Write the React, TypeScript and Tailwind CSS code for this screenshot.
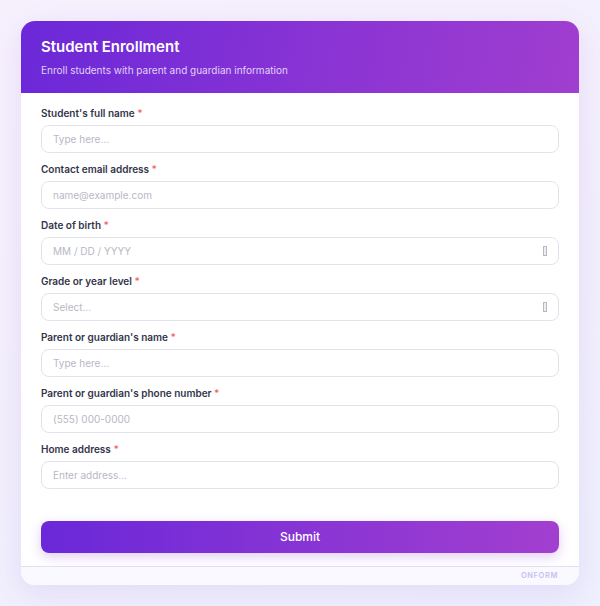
import React from "react";

const fields = [
  { label: "Student's full name", placeholder: "Type here..." },
  { label: "Contact email address", placeholder: "name@example.com" },
  { label: "Date of birth", placeholder: "MM / DD / YYYY", icon: true },
  { label: "Grade or year level", placeholder: "Select...", icon: true },
  { label: "Parent or guardian's name", placeholder: "Type here..." },
  { label: "Parent or guardian's phone number", placeholder: "(555) 000-0000" },
  { label: "Home address", placeholder: "Enter address..." },
];

export default function App() {
  return (
    <div
      className="h-[606px] w-full bg-[linear-gradient(160deg,#f6f0fd_0%,#f3effc_50%,#eef0fd_100%)] px-[21px] pt-[21px]"
      style={{ fontFamily: "Inter, 'Noto Sans', sans-serif" }}
    >
      <div className="overflow-hidden rounded-[14px] bg-white shadow-[0_8px_28px_rgba(140,90,220,0.14)]">
        <div className="h-[72px] bg-[linear-gradient(100deg,#6b28d8_0%,#8a34d4_55%,#a03ecf_100%)] px-5 pt-[16px]">
          <h1 className="text-[15px] font-semibold leading-[20px] text-white">Student Enrollment</h1>
          <p className="mt-[6px] text-[10px] leading-[14px] text-[#e2d2f7]">
            Enroll students with parent and guardian information
          </p>
        </div>
        <div className="px-5 pt-[13px]">
          <div className="flex flex-col gap-[9px]">
            {fields.map((f) => (
              <div key={f.label} className="flex flex-col gap-[5px]">
                <label className="text-[10px] font-semibold leading-[14px] text-[#33354a]">
                  {f.label} <span className="text-[#f26b6b]">*</span>
                </label>
                <div className="flex h-[28px] items-center justify-between rounded-[8px] border-[1.5px] border-[#e3e2ea] px-[11px]">
                  <span className="text-[10px] text-[#b8b8c4]">{f.placeholder}</span>
                  {f.icon && <span className="h-[10px] w-[4px] border border-[#b8b8c6] bg-[#ececf1]" />}
                </div>
              </div>
            ))}
          </div>
          <button className="mt-[32px] mb-[13px] flex h-[32px] w-full items-center justify-center rounded-[8px] bg-[linear-gradient(90deg,#6a28d8_0%,#8a35d4_55%,#a23fcf_100%)] text-[12px] font-medium text-white shadow-[0_4px_12px_rgba(140,60,220,0.25)]">
            Submit
          </button>
        </div>
        <div className="flex h-[19px] items-center justify-end border-t border-[#e4e1ee] bg-[#faf9ff] px-[21px]">
          <span className="text-[7.5px] font-semibold tracking-[0.08em] text-[#c7bff0]">ONFORM</span>
        </div>
      </div>
    </div>
  );
}
